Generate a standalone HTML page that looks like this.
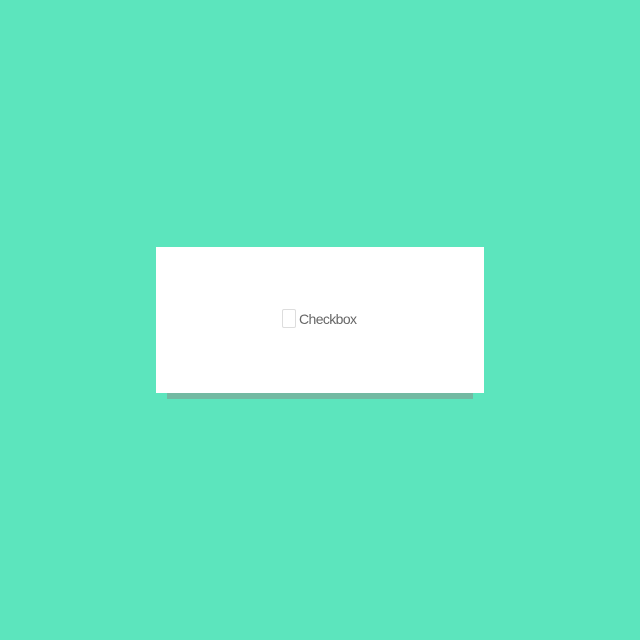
<!DOCTYPE html>
<html><head><style>
html,body{margin:0;padding:0;width:640px;height:640px;background:#5ce5bd;overflow:hidden}
.card{position:absolute;left:156px;top:247px;width:328px;height:146px;background:#fff}
.sh{position:absolute;left:167px;top:393px;width:306px;height:6px;background:#72b9a2}
.cb{position:absolute;left:282px;top:309px;width:12px;height:17px;border:1px solid #ddd;border-radius:2px}
.t{position:absolute;left:299px;top:311px;font:14px "Liberation Sans",sans-serif;color:#666;letter-spacing:-0.6px}
</style></head><body>
<div class="sh"></div>
<div class="card"></div>
<div class="cb"></div>
<div class="t">Checkbox</div>
</body></html>
